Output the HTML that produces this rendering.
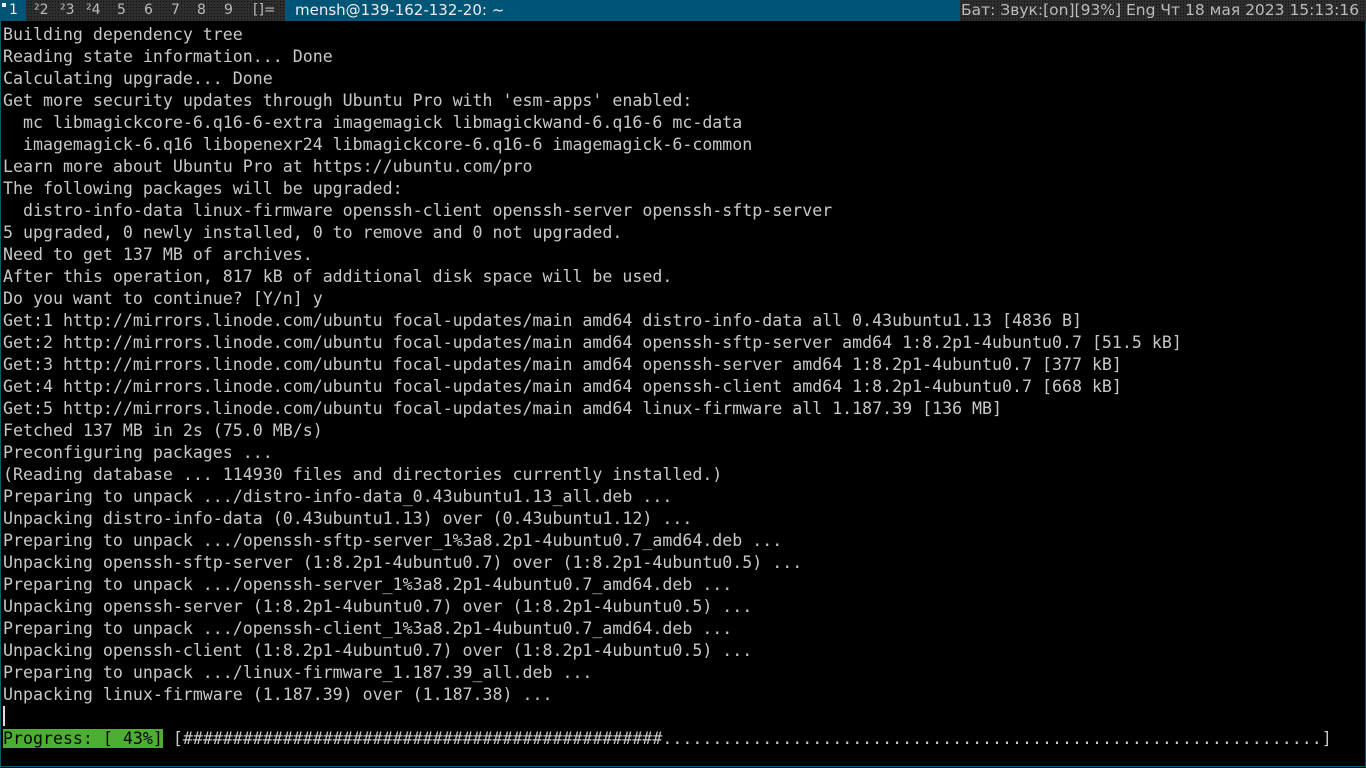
<!DOCTYPE html>
<html><head><meta charset="utf-8"><style>
html,body{margin:0;padding:0;width:1366px;height:768px;overflow:hidden;background:#000}
#bar{position:absolute;left:0;top:0;width:1366px;height:21px;background-color:#2e2e2e;background-image:radial-gradient(#111 0.7px,transparent 0.8px);background-size:3px 3px;font:14px "DejaVu Sans","Liberation Sans",sans-serif;color:#bbb;line-height:21px}
.ws{position:absolute;top:0;height:21px}
#title{position:absolute;left:285px;top:0;width:675px;height:21px;background:#005577;color:#eee;font-size:15px}
#term{position:absolute;left:0;top:21px;width:1364px;height:745px;border:1px solid #0d5b73;border-top:none}
pre{margin:0;position:absolute;left:2px;top:3px;font:16.6px "DejaVu Sans Mono","Liberation Mono",monospace;line-height:22px;color:#c8c8c8}
.g{background:#4caf32;color:#000}
</style></head><body>
<div id="bar">
<div class="ws" style="left:0;width:26px;background:#005577;color:#eee"><span style="position:absolute;left:2px;top:3px;width:4px;height:4px;background:#eee"></span><span style="position:absolute;left:9px">1</span></div>
<div class="ws" style="left:34px">²2</div>
<div class="ws" style="left:60px">²3</div>
<div class="ws" style="left:86px">²4</div>
<div class="ws" style="left:117px">5</div>
<div class="ws" style="left:144px">6</div>
<div class="ws" style="left:171px">7</div>
<div class="ws" style="left:197px">8</div>
<div class="ws" style="left:224px">9</div>
<div class="ws" style="left:253px">[]=</div>
<div id="title"><span style="position:absolute;left:10px">mensh@139-162-132-20: ~</span></div>
<div class="ws" style="left:961px;white-space:nowrap;font-size:15.5px">Бат: Звук:[on][93%] Eng Чт 18 мая 2023 15:13:16</div>
</div>
<div id="term"><pre>Building dependency tree
Reading state information... Done
Calculating upgrade... Done
Get more security updates through Ubuntu Pro with 'esm-apps' enabled:
  mc libmagickcore-6.q16-6-extra imagemagick libmagickwand-6.q16-6 mc-data
  imagemagick-6.q16 libopenexr24 libmagickcore-6.q16-6 imagemagick-6-common
Learn more about Ubuntu Pro at https://ubuntu.com/pro
The following packages will be upgraded:
  distro-info-data linux-firmware openssh-client openssh-server openssh-sftp-server
5 upgraded, 0 newly installed, 0 to remove and 0 not upgraded.
Need to get 137 MB of archives.
After this operation, 817 kB of additional disk space will be used.
Do you want to continue? [Y/n] y
Get:1 http://mirrors.linode.com/ubuntu focal-updates/main amd64 distro-info-data all 0.43ubuntu1.13 [4836 B]
Get:2 http://mirrors.linode.com/ubuntu focal-updates/main amd64 openssh-sftp-server amd64 1:8.2p1-4ubuntu0.7 [51.5 kB]
Get:3 http://mirrors.linode.com/ubuntu focal-updates/main amd64 openssh-server amd64 1:8.2p1-4ubuntu0.7 [377 kB]
Get:4 http://mirrors.linode.com/ubuntu focal-updates/main amd64 openssh-client amd64 1:8.2p1-4ubuntu0.7 [668 kB]
Get:5 http://mirrors.linode.com/ubuntu focal-updates/main amd64 linux-firmware all 1.187.39 [136 MB]
Fetched 137 MB in 2s (75.0 MB/s)
Preconfiguring packages ...
(Reading database ... 114930 files and directories currently installed.)
Preparing to unpack .../distro-info-data_0.43ubuntu1.13_all.deb ...
Unpacking distro-info-data (0.43ubuntu1.13) over (0.43ubuntu1.12) ...
Preparing to unpack .../openssh-sftp-server_1%3a8.2p1-4ubuntu0.7_amd64.deb ...
Unpacking openssh-sftp-server (1:8.2p1-4ubuntu0.7) over (1:8.2p1-4ubuntu0.5) ...
Preparing to unpack .../openssh-server_1%3a8.2p1-4ubuntu0.7_amd64.deb ...
Unpacking openssh-server (1:8.2p1-4ubuntu0.7) over (1:8.2p1-4ubuntu0.5) ...
Preparing to unpack .../openssh-client_1%3a8.2p1-4ubuntu0.7_amd64.deb ...
Unpacking openssh-client (1:8.2p1-4ubuntu0.7) over (1:8.2p1-4ubuntu0.5) ...
Preparing to unpack .../linux-firmware_1.187.39_all.deb ...
Unpacking linux-firmware (1.187.39) over (1.187.38) ...
<span style="display:inline-block;width:2px;height:20px;background:#ddd;vertical-align:top"></span>
<span class="g">Progress: [ 43%]</span> [################################################..................................................................]</pre></div>
</body></html>
